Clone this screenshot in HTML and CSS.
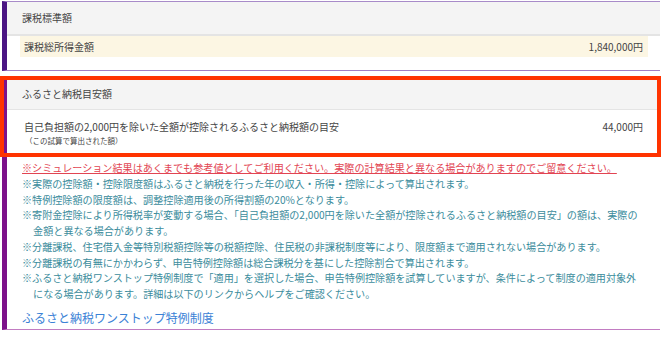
FILE: index.html
```html
<!DOCTYPE html>
<html lang="ja">
<head>
    <meta charset="UTF-8">
    <meta name="viewport" content="width=device-width, initial-scale=1.0">
    <title>ふるさと納税目安額</title>
    <link rel="stylesheet" href="styles.css">
</head>
<body>
    <div class="page">
        <!-- 課税標準額 -->
        <div class="card card-base">
            <div class="card-head">課税標準額</div>
            <div class="card-body">
                <div class="base-row">
                    <span>課税総所得金額</span>
                    <span class="amount">1,840,000円</span>
                </div>
            </div>
        </div>

        <!-- ふるさと納税目安額 -->
        <div class="card card-furusato">
            <div class="focus">
                <div class="card-head">ふるさと納税目安額</div>
                <div class="result-row">
                    <div class="result-label">
                        <p>自己負担額の2,000円を除いた全額が控除されるふるさと納税額の目安</p>
                        <p class="sub">（この試算で算出された額）</p>
                    </div>
                    <span class="amount">44,000円</span>
                </div>
            </div>

            <ul class="notes">
                <li class="warn"><span>※シミュレーション結果はあくまでも参考値としてご利用ください。実際の計算結果と異なる場合がありますのでご留意ください。</span></li>
                <li>※実際の控除額・控除限度額はふるさと納税を行った年の収入・所得・控除によって算出されます。</li>
                <li>※特例控除額の限度額は、調整控除適用後の所得割額の20%となります。</li>
                <li>※寄附金控除により所得税率が変動する場合、「自己負担額の2,000円を除いた全額が控除されるふるさと納税額の目安」の額は、実際の金額と異なる場合があります。</li>
                <li>※分離課税、住宅借入金等特別税額控除等の税額控除、住民税の非課税制度等により、限度額まで適用されない場合があります。</li>
                <li>※分離課税の有無にかかわらず、申告特例控除額は総合課税分を基にした控除割合で算出されます。</li>
                <li>※ふるさと納税ワンストップ特例制度で「適用」を選択した場合、申告特例控除額を試算していますが、条件によって制度の適用対象外になる場合があります。詳細は以下のリンクからヘルプをご確認ください。</li>
            </ul>

            <a class="help-link" href="#">ふるさと納税ワンストップ特例制度</a>
        </div>
    </div>
</body>
</html>
```

FILE: styles.css
```css
body {
    margin: 0;
    padding: 0;
    background-color: #fff;
    font-family: "Noto Sans CJK JP", "Noto Sans", sans-serif;
    color: #444;
}

.page {
    padding: 1px 10px 0 2px;
}

.card {
    background-color: #fff;
    border-left: 5px solid #4b1583;
    border-top: 1px solid #a88bc9;
    border-bottom: 1px solid #a07fc4;
}

.card-head {
    height: 32px;
    line-height: 32px;
    padding-left: 15px;
    font-size: 10px;
    background-color: #f4f4f4;
    border-bottom: 2px solid #e4e4e4;
}

.card-body {
    padding: 0 12px 13px 13px;
}

.base-row {
    display: flex;
    justify-content: space-between;
    height: 21px;
    line-height: 22px;
    padding: 0 5px 0 4px;
    font-size: 10px;
    background-color: #fcf6e3;
}

.card-furusato {
    margin-top: 6px;
    border-left-color: #7d118a;
    border-top-color: #e5e5e5;
    border-bottom-color: #c27cc2;
}

.card-furusato .card-head {
    height: 31px;
    line-height: 31px;
    border-bottom-width: 1px;
}

.focus {
    position: relative;
}

/* red highlight frame drawn over the result block */
.focus::after {
    content: "";
    position: absolute;
    top: -2px;
    left: -7px;
    right: -1px;
    bottom: -2px;
    border: 4px solid #ff3300;
    pointer-events: none;
}

.result-row {
    display: flex;
    justify-content: space-between;
    align-items: flex-start;
    padding: 9px 17px 8px 17px;
}

.result-label p {
    margin: 0;
    font-size: 10px;
    line-height: 16px;
}

.result-label .sub {
    font-size: 7.5px;
    line-height: 12px;
    padding-left: 1px;
}

.result-row .amount {
    font-size: 10px;
    line-height: 16px;
}

.notes {
    list-style: none;
    margin: 0;
    padding: 5px 20px 0 15px;
    font-size: 10.1px;
    line-height: 15.75px;
    color: #3b8c9c;
}

.notes li {
    padding-left: 1.1em;
    text-indent: -1.1em;
}

.notes .warn {
    color: #e24452;
}

.notes .warn span {
    text-decoration: underline;
}

.help-link {
    display: block;
    margin: 8px 0 0 15px;
    padding-bottom: 3px;
    font-size: 12px;
    line-height: 16px;
    color: #3b82d6;
    text-decoration: none;
}
```
